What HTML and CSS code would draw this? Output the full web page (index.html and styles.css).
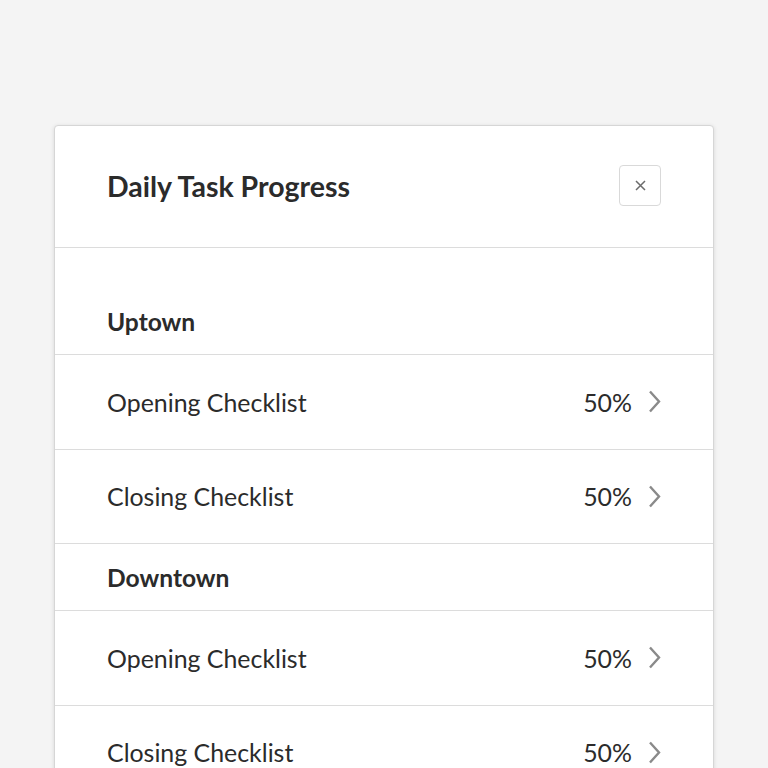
FILE: index.html
```html
<!DOCTYPE html>
<html>
<head>
<meta charset="utf-8">
<link rel="stylesheet" href="styles.css">
</head>
<body>
<div class="page">
  <div class="card">
    <div class="card-header">
      <h1 class="title">Daily Task Progress</h1>
      <button class="close-btn" aria-label="Close">
        <svg width="11" height="11" viewBox="0 0 11 11"><path d="M1 1L10 10M10 1L1 10" stroke="#6b6b6b" stroke-width="1.5" fill="none"/></svg>
      </button>
    </div>
    <div class="card-body">
      <div class="section-title">Uptown</div>
      <div class="row"><span class="row-label">Opening Checklist</span><span class="row-right"><span class="pct">50%</span><svg class="chev" width="13" height="23" viewBox="0 0 13 23"><path d="M2 1.5L11 11.5L2 21.5" stroke="#8a8a8a" stroke-width="2.4" fill="none"/></svg></span></div>
      <div class="row"><span class="row-label">Closing Checklist</span><span class="row-right"><span class="pct">50%</span><svg class="chev" width="13" height="23" viewBox="0 0 13 23"><path d="M2 1.5L11 11.5L2 21.5" stroke="#8a8a8a" stroke-width="2.4" fill="none"/></svg></span></div>
      <div class="section-title">Downtown</div>
      <div class="row"><span class="row-label">Opening Checklist</span><span class="row-right"><span class="pct">50%</span><svg class="chev" width="13" height="23" viewBox="0 0 13 23"><path d="M2 1.5L11 11.5L2 21.5" stroke="#8a8a8a" stroke-width="2.4" fill="none"/></svg></span></div>
      <div class="row"><span class="row-label">Closing Checklist</span><span class="row-right"><span class="pct">50%</span><svg class="chev" width="13" height="23" viewBox="0 0 13 23"><path d="M2 1.5L11 11.5L2 21.5" stroke="#8a8a8a" stroke-width="2.4" fill="none"/></svg></span></div>
    </div>
  </div>
</div>
</body>
</html>
```
FILE: styles.css
```css
html, body {
  margin: 0;
  padding: 0;
  background: #f4f4f4;
  font-family: "Lato", "Open Sans", sans-serif;
  color: #2b2b2b;
}
.page {
  padding: 125px 54px 0 54px;
  height: 768px;
  box-sizing: border-box;
  overflow: hidden;
}
.card {
  background: #fff;
  border: 1px solid #d6d6d6;
  border-radius: 4px;
  box-shadow: 0 1px 4px rgba(0,0,0,0.12);
  height: 700px;
}
.card-header {
  height: 121px;
  display: flex;
  align-items: center;
  justify-content: space-between;
  padding: 0 52px;
  border-bottom: 1px solid #dcdcdc;
}
.title {
  margin: 0 0 2px 0;
  font-size: 28.5px;
  font-weight: 700;
  color: #2b2b2b;
}
.close-btn {
  width: 42px;
  height: 41px;
  margin-bottom: 2px;
  border: 1px solid #d9d9d9;
  border-radius: 4px;
  background: #fff;
  display: flex;
  align-items: center;
  justify-content: center;
  padding: 0;
}
.card-body {
  padding-top: 40px;
}
.section-title {
  height: 66px;
  display: flex;
  align-items: center;
  padding: 0 52px;
  font-size: 24.6px;
  font-weight: 700;
  border-bottom: 1px solid #dcdcdc;
}
.row {
  height: 93.5px;
  display: flex;
  align-items: center;
  justify-content: space-between;
  padding: 0 52px;
  font-size: 24.9px;
  border-bottom: 1px solid #dcdcdc;
}
.row-right {
  display: flex;
  align-items: center;
  gap: 16px;
}
.chev {
  display: block;
}
```
